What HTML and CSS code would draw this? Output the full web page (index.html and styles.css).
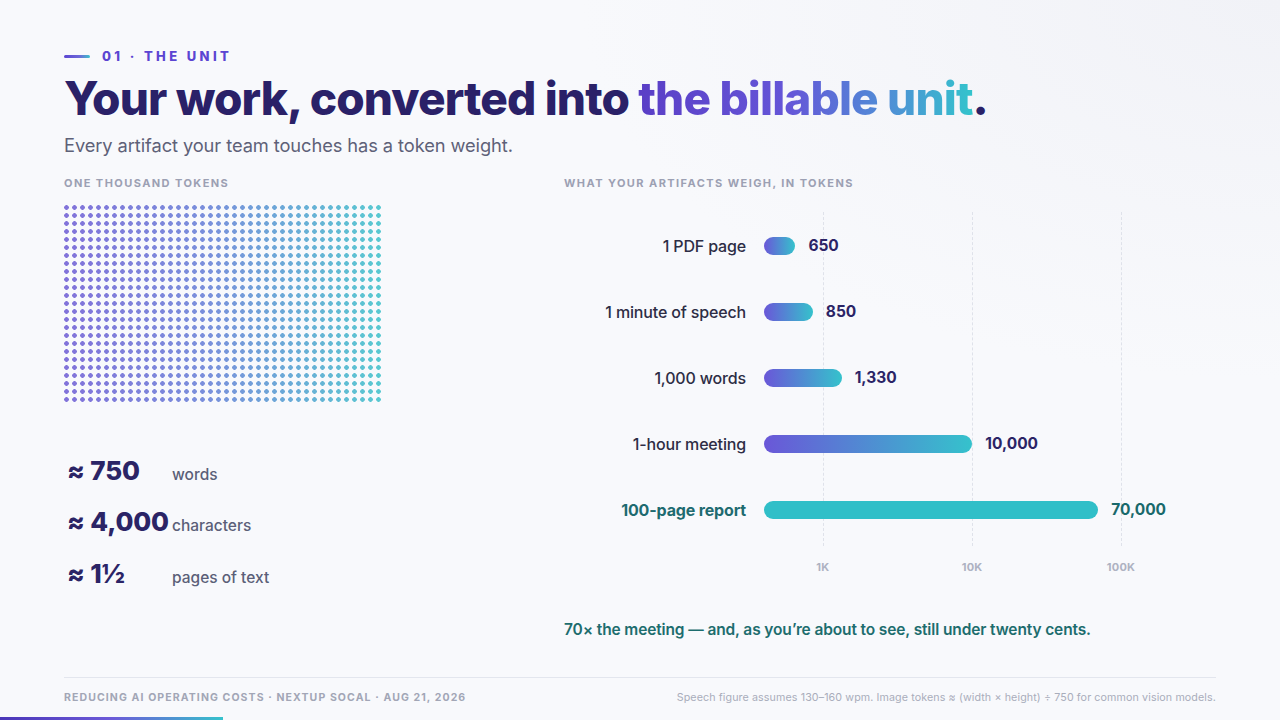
FILE: index.html
```html
<!DOCTYPE html>
<html lang="en">
<head>
<meta charset="utf-8">
<title>01 · The Unit</title>
<link rel="stylesheet" href="styles.css">
</head>
<body>
<div class="slide">
  <header class="head">
    <div class="eyebrow"><span class="eyebrow-line"></span><span class="eyebrow-text">01 · THE UNIT</span></div>
    <h1 class="title">Your work, converted into <span class="grad">the billable unit</span>.</h1>
    <p class="subtitle">Every artifact your team touches has a token weight.</p>
  </header>

  <main class="cols">
    <section class="left">
      <div class="section-label">ONE THOUSAND TOKENS</div>
      <div class="dots" aria-label="1,000 dots"></div>
      <div class="stats">
        <div class="stat"><span class="num">≈ 750</span><span class="lbl">words</span></div>
        <div class="stat"><span class="num">≈ 4,000</span><span class="lbl">characters</span></div>
        <div class="stat"><span class="num">≈ 1½</span><span class="lbl">pages of text</span></div>
      </div>
    </section>

    <section class="right">
      <div class="section-label">WHAT YOUR ARTIFACTS WEIGH, IN TOKENS</div>
      <div class="chart">
        <div class="grid-lines">
          <span class="gl" style="left:16.5%"></span>
          <span class="gl" style="left:58.3%"></span>
          <span class="gl" style="left:100%"></span>
        </div>
        <div class="row"><span class="rlabel">1 PDF page</span><div class="track"><span class="bar" style="width:31.4px"></span><span class="val">650</span></div></div>
        <div class="row"><span class="rlabel">1 minute of speech</span><div class="track"><span class="bar" style="width:48.8px"></span><span class="val">850</span></div></div>
        <div class="row"><span class="rlabel">1,000 words</span><div class="track"><span class="bar" style="width:77.7px"></span><span class="val">1,330</span></div></div>
        <div class="row"><span class="rlabel">1-hour meeting</span><div class="track"><span class="bar" style="width:208.3px"></span><span class="val">10,000</span></div></div>
        <div class="row hi"><span class="rlabel">100-page report</span><div class="track"><span class="bar" style="width:334.2px"></span><span class="val">70,000</span></div></div>
      </div>
      <div class="axis">
        <span class="tick" style="left:16.5%">1K</span>
        <span class="tick" style="left:58.3%">10K</span>
        <span class="tick" style="left:100%">100K</span>
      </div>
      <p class="caption">70× the meeting — and, as you’re about to see, still under twenty cents.</p>
    </section>
  </main>

  <footer class="foot">
    <span class="foot-left">REDUCING AI OPERATING COSTS · NEXTUP SOCAL · AUG 21, 2026</span>
    <span class="foot-right">Speech figure assumes 130–160 wpm. Image tokens ≈ (width × height) ÷ 750 for common vision models.</span>
  </footer>
  <div class="progress"></div>
</div>
</body>
</html>
```

FILE: styles.css
```css
* { box-sizing: border-box; margin: 0; padding: 0; }
html, body { width: 1280px; height: 720px; overflow: hidden; }
body {
  font-family: Inter, "Noto Sans", "Liberation Sans", sans-serif;
  background: #f8f9fc;
  color: #2b2466;
}
.slide {
  position: relative;
  width: 1280px;
  height: 720px;
  padding: 47px 64px 16px;
  display: flex;
  flex-direction: column;
  background: radial-gradient(ellipse 700px 380px at 100% 0%, #f1f2f7 0%, rgba(241,242,247,0) 100%), #f8f9fc;
}

/* header */
.eyebrow { display: flex; align-items: center; gap: 12px; height: 18px; }
.eyebrow-line { width: 26px; height: 3px; border-radius: 2px; background: linear-gradient(90deg, #5b45d2, #6d6ad8 60%, #3cc2cc); }
.eyebrow-text { font-size: 13px; font-weight: 800; letter-spacing: 0.26em; color: #5b45d2; line-height: 18px; }
.title {
  margin-top: 8px;
  font-size: 46px;
  line-height: 1.1;
  font-weight: 800;
  letter-spacing: -0.019em;
  color: #2a2168;
  white-space: nowrap;
}
.grad {
  background: linear-gradient(90deg, #5a3ec6 0%, #6556d8 45%, #4f8fd6 75%, #33c4cc 100%);
  -webkit-background-clip: text;
  background-clip: text;
  color: transparent;
}
.subtitle { margin-top: 9px; font-size: 18.3px; line-height: 25px; color: #5e6178; font-weight: 400; letter-spacing: -0.005em; }

/* columns */
.cols { display: grid; grid-template-columns: 452px 1fr; column-gap: 48px; margin-top: 18px; }
.section-label { font-size: 11px; line-height: 14px; font-weight: 700; letter-spacing: 0.13em; color: #9ca0b3; }

.dots {
  margin-top: 15px;
  width: 320px;
  height: 200px;
  background: linear-gradient(90deg, #7868d8 0%, #7088da 45%, #4cc6ce 100%);
  opacity: 0.92;
  -webkit-mask-image: radial-gradient(circle at 2.5px 2.5px, #000 2px, transparent 2.6px);
  -webkit-mask-size: 8px 8px;
  mask-image: radial-gradient(circle at 2.5px 2.5px, #000 2px, transparent 2.6px);
  mask-size: 8px 8px;
}

.stats { margin-top: 40px; display: flex; flex-direction: column; }
.stat { display: grid; grid-template-columns: 108px auto; align-items: baseline; height: 51.5px; line-height: 51.5px; }
.num { font-size: 26px; font-weight: 800; color: #2b2466; white-space: nowrap; padding-left: 3px; letter-spacing: -0.005em; }
.lbl { font-size: 15.5px; font-weight: 500; color: #5b5f78; }

/* chart */
.chart { position: relative; margin-top: 23px; }
.grid-lines { position: absolute; left: 200px; width: 357px; top: -1px; bottom: -3px; pointer-events: none; }
.gl { position: absolute; top: 0; bottom: 0; width: 0; border-left: 1px dashed #dfe2ea; }
.row { display: grid; grid-template-columns: 182px 1fr; column-gap: 18px; align-items: center; height: 66px; position: relative; }
.rlabel { text-align: right; font-size: 16px; font-weight: 500; color: #2d2d45; white-space: nowrap; letter-spacing: -0.01em; }
.track { display: flex; align-items: center; }
.bar { height: 18px; border-radius: 9px; background: linear-gradient(90deg, #6a57d8, #35c2cc); flex: none; }
.val { margin-left: 13px; font-size: 15.5px; font-weight: 700; color: #2b2466; }
.row.hi .rlabel { color: #1e6b70; font-weight: 700; }
.row.hi .bar { background: #30bfc8; }
.row.hi .val { color: #19696b; }

.axis { position: relative; margin-left: 200px; width: 357px; height: 14px; margin-top: 17px; }
.tick { position: absolute; top: 0; transform: translateX(-50%); font-size: 11px; line-height: 14px; font-weight: 700; color: #aeb2c2; letter-spacing: 0.02em; }

.caption { margin-top: 45px; font-size: 15.5px; line-height: 22px; font-weight: 600; color: #1d6d6e; letter-spacing: -0.008em; }

/* footer */
.foot {
  margin-top: auto;
  border-top: 1px solid #e3e6ee;
  padding-top: 14px;
  display: flex;
  justify-content: space-between;
  align-items: center;
  line-height: 12px;
}
.foot-left { font-size: 10.5px; font-weight: 700; letter-spacing: 0.105em; color: #a2a6b6; }
.foot-right { font-size: 10.7px; color: #a9adbb; letter-spacing: 0.01em; }
.progress { position: absolute; left: 0; bottom: 0; width: 223px; height: 3px; background: linear-gradient(90deg, #4a36b8, #6c5ad8 50%, #36c2cc); }
```
